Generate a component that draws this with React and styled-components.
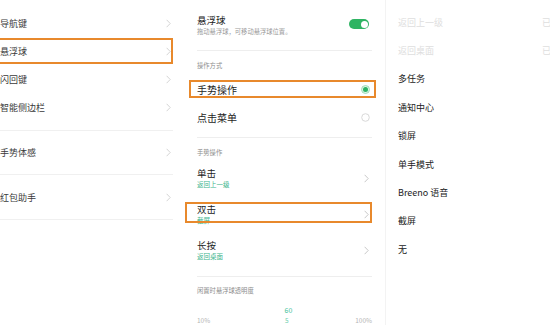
import React from "react";
import styled, { createGlobalStyle } from "styled-components";

const Global = createGlobalStyle`
  html, body {
    margin: 0;
    padding: 0;
    background: #fff;
    overflow: hidden;
  }
  body {
    font-family: "Noto Sans CJK SC", "Noto Sans", sans-serif;
    color: #222;
  }
`;

const ORANGE = "#e8892c";
const GREEN = "#2fb463";
const TEAL = "#3cb58c";

export default function App() {
  return (
    <Page>
      <Global />
      <LeftPanel>
        <Group $pad="9px 0 9px">
          <NavRow>
            导航键
            <Chevron />
          </NavRow>
          <NavRow>
            <Mark $inset="1px 0 1px -2px" />
            悬浮球
            <Chevron />
          </NavRow>
          <NavRow>
            闪回键
            <Chevron />
          </NavRow>
          <NavRow>
            智能侧边栏
            <Chevron />
          </NavRow>
        </Group>
        <Group>
          <NavRow $h="43px">
            手势体感
            <Chevron />
          </NavRow>
        </Group>
        <Group>
          <NavRow $h="44px">
            红包助手
            <Chevron />
          </NavRow>
        </Group>
      </LeftPanel>

      <MidPanel>
        <Header>
          <div>
            <Title>悬浮球</Title>
            <Hint>拖动悬浮球，可移动悬浮球位置。</Hint>
          </div>
          <Toggle />
        </Header>
        <SectionLabel $pad="10px 0 0" $h="24px">操作方式</SectionLabel>
        <OptionRow>
          <Mark $inset="5px -4px 5px -8px" />
          <OptionText>手势操作</OptionText>
          <Radio $on />
        </OptionRow>
        <OptionRow>
          <OptionText>点击菜单</OptionText>
          <Radio />
        </OptionRow>
        <Spacer $h="6px" />
        <Line />
        <SectionLabel $pad="10px 0 0" $h="24px">手势操作</SectionLabel>
        <ActionRow>
          <div>
            <Title>单击</Title>
            <Sub>返回上一级</Sub>
          </div>
          <Chevron $dark />
        </ActionRow>
        <ActionRow>
          <Mark $inset="4px 0 11px -12px" />
          <div>
            <Title>双击</Title>
            <Sub>截屏</Sub>
          </div>
          <Chevron $dark />
        </ActionRow>
        <ActionRow>
          <div>
            <Title>长按</Title>
            <Sub>返回桌面</Sub>
          </div>
          <Chevron $dark />
        </ActionRow>
        <Spacer $h="6px" />
        <Line />
        <SectionLabel $pad="9px 0 0" $h="20px">闲置时悬浮球透明度</SectionLabel>
        <SliderValue>60</SliderValue>
        <SliderScale>
          <span>10%</span>
          <span>5</span>
          <span>100%</span>
        </SliderScale>
      </MidPanel>

      <RightPanel>
        <PickRow $faded>
          返回上一级
          <State>已</State>
        </PickRow>
        <PickRow $faded>
          返回桌面
          <State>已</State>
        </PickRow>
        <PickRow>多任务</PickRow>
        <PickRow>通知中心</PickRow>
        <PickRow>锁屏</PickRow>
        <PickRow>单手模式</PickRow>
        <PickRow>Breeno 语音</PickRow>
        <PickRow>截屏</PickRow>
        <PickRow>无</PickRow>
      </RightPanel>
    </Page>
  );
}

function Chevron({ $dark }) {
  return (
    <ChevronSvg width="5" height="9" viewBox="0 0 5 9">
      <polyline
        points="0.6,0.8 4.2,4.5 0.6,8.2"
        fill="none"
        stroke={$dark ? "#c2c2c2" : "#cfcfcf"}
        strokeWidth="0.9"
      />
    </ChevronSvg>
  );
}

function Radio({ $on }) {
  return (
    <svg width="9" height="9" viewBox="0 0 9 9">
      {$on ? (
        <>
          <circle cx="4.5" cy="4.5" r="4" fill="#dff3e7" stroke="#8fd5aa" strokeWidth="0.8" />
          <circle cx="4.5" cy="4.5" r="2.5" fill={GREEN} />
        </>
      ) : (
        <circle cx="4.5" cy="4.5" r="3.8" fill="none" stroke="#cfcfcf" strokeWidth="0.8" />
      )}
    </svg>
  );
}

const Page = styled.div`
  display: flex;
  width: 550px;
  height: 325px;
  overflow: hidden;
  background: #fff;
`;

const LeftPanel = styled.div`
  width: 182px;
  flex-shrink: 0;
  padding-right: 9px;
  box-sizing: border-box;
`;

const Group = styled.div`
  padding: ${(p) => p.$pad || "0"};
  border-bottom: 1px solid #f0f0f0;
`;

const NavRow = styled.div`
  position: relative;
  height: ${(p) => p.$h || "28px"};
  display: flex;
  align-items: center;
  justify-content: space-between;
  padding-right: 2px;
  font-size: 9px;
  color: #3a3a3a;
`;

const ChevronSvg = styled.svg`
  flex-shrink: 0;
`;

const Mark = styled.span`
  position: absolute;
  inset: ${(p) => p.$inset};
  border: 2.5px solid ${ORANGE};
  pointer-events: none;
`;

const MidPanel = styled.div`
  width: 203px;
  flex-shrink: 0;
  padding: 0 13px 0 15px;
  box-sizing: border-box;
  display: flex;
  flex-direction: column;
`;

const Header = styled.div`
  height: 51px;
  flex-shrink: 0;
  padding-top: 14px;
  box-sizing: border-box;
  display: flex;
  align-items: flex-start;
  justify-content: space-between;
  border-bottom: 1px solid #eeeeee;
`;

const Title = styled.div`
  font-size: 9.5px;
  line-height: 13px;
  color: #222;
`;

const Hint = styled.div`
  font-size: 6.3px;
  line-height: 9px;
  color: #9a9a9a;
`;

const Toggle = styled.span`
  position: relative;
  margin-top: 5px;
  margin-right: 3px;
  width: 20px;
  height: 10px;
  border-radius: 5px;
  background: ${GREEN};
  &::after {
    content: "";
    position: absolute;
    right: 1.5px;
    top: 1.5px;
    width: 7px;
    height: 7px;
    border-radius: 50%;
    background: #fff;
  }
`;

const SectionLabel = styled.div`
  height: ${(p) => p.$h};
  flex-shrink: 0;
  padding: ${(p) => p.$pad};
  box-sizing: border-box;
  font-size: 6.3px;
  line-height: 10px;
  color: #8d8d8d;
`;

const OptionRow = styled.div`
  position: relative;
  height: 28px;
  flex-shrink: 0;
  display: flex;
  align-items: center;
  justify-content: space-between;
  padding-right: 2px;
`;

const OptionText = styled.span`
  font-size: 10px;
  color: #1e1e1e;
`;

const Spacer = styled.div`
  height: ${(p) => p.$h};
  flex-shrink: 0;
`;

const Line = styled.div`
  height: 1px;
  background: #eeeeee;
  flex-shrink: 0;
`;

const ActionRow = styled.div`
  position: relative;
  height: 36px;
  flex-shrink: 0;
  padding-top: 5px;
  box-sizing: border-box;
  display: flex;
  align-items: flex-start;
  justify-content: space-between;
  padding-right: 3px;
  svg {
    margin-top: 7px;
  }
`;

const Sub = styled.div`
  font-size: 6.5px;
  line-height: 9px;
  color: ${TEAL};
`;

const SliderValue = styled.div`
  flex-shrink: 0;
  margin-top: 8px;
  text-align: center;
  font-size: 7px;
  line-height: 10px;
  color: #45c29b;
  padding-left: 8px;
`;

const SliderScale = styled.div`
  flex-shrink: 0;
  display: flex;
  justify-content: space-between;
  margin-top: 1px;
  font-size: 6.5px;
  line-height: 9px;
  color: #b5b5b5;
  span:nth-child(2) {
    color: #6ccfae;
    padding-left: 8px;
  }
`;

const RightPanel = styled.div`
  flex: 1;
  padding: 8px 0 0 12px;
  border-left: 1px solid #f3f3f3;
  overflow: hidden;
`;

const PickRow = styled.div`
  height: 28.4px;
  display: flex;
  align-items: center;
  justify-content: space-between;
  font-size: 9px;
  color: ${(p) => (p.$faded ? "#dedede" : "#222")};
  white-space: nowrap;
`;

const State = styled.span`
  margin-right: -1px;
`;
